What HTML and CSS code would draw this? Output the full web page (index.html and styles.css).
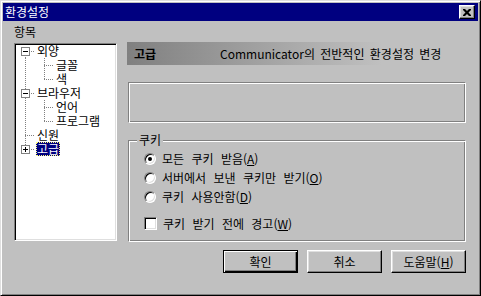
FILE: index.html
```html
<!DOCTYPE html>
<html lang="ko">
<head>
<meta charset="utf-8">
<title>환경설정</title>
<link rel="stylesheet" href="styles.css">
</head>
<body>
<div class="window">
  <div class="titlebar">
    <span class="title">환경설정</span>
    <button class="close" type="button" aria-label="닫기">
      <svg width="8" height="7" viewBox="0 0 8 7"><path d="M0 0h2l2 2 2-2h2v1l-2.5 2.5L8 6v1H6L4 5 2 7H0V6l2.5-2.5L0 1z" fill="#000"/></svg>
    </button>
  </div>
  <div class="main">
    <div class="left">
      <div class="label">항목</div>
      <div class="tree">
        <ul class="tree-list">
          <li class="row"><span class="cell c-first"><svg class="box" width="9" height="9" viewBox="0 0 9 9"><rect x="0.5" y="0.5" width="8" height="8" fill="#fff" stroke="#808080"/><path d="M2 4.5h5" stroke="#000"/></svg></span><span class="txt">외양</span></li>
          <li class="row"><span class="cell c-pass"></span><span class="cell c-tee"></span><span class="txt">글꼴</span></li>
          <li class="row"><span class="cell c-pass"></span><span class="cell c-ell"></span><span class="txt">색</span></li>
          <li class="row"><span class="cell c-mid"><svg class="box" width="9" height="9" viewBox="0 0 9 9"><rect x="0.5" y="0.5" width="8" height="8" fill="#fff" stroke="#808080"/><path d="M2 4.5h5" stroke="#000"/></svg></span><span class="txt">브라우저</span></li>
          <li class="row"><span class="cell c-pass"></span><span class="cell c-tee"></span><span class="txt">언어</span></li>
          <li class="row"><span class="cell c-pass"></span><span class="cell c-ell"></span><span class="txt">프로그램</span></li>
          <li class="row"><span class="cell c-tee"></span><span class="txt">신원</span></li>
          <li class="row"><span class="cell c-ell"><svg class="box" width="9" height="9" viewBox="0 0 9 9"><rect x="0.5" y="0.5" width="8" height="8" fill="#fff" stroke="#808080"/><path d="M2 4.5h5M4.5 2v5" stroke="#000"/></svg></span><span class="txt sel">고급</span></li>
        </ul>
      </div>
    </div>
    <div class="right">
      <div class="banner"><b class="banner-title">고급</b><span class="banner-desc">Communicator의 전반적인 환경설정 변경</span></div>
      <div class="frame"></div>
      <div class="group">
        <span class="legend">쿠키</span>
        <div class="opt"><span class="radio checked"></span><span>모든 쿠키 받음(<u>A</u>)</span></div>
        <div class="opt"><span class="radio"></span><span>서버에서 보낸 쿠키만 받기(<u>O</u>)</span></div>
        <div class="opt"><span class="radio"></span><span>쿠키 사용안함(<u>D</u>)</span></div>
        <div class="opt opt-check"><span class="check"></span><span>쿠키 받기 전에 경고(<u>W</u>)</span></div>
      </div>
      <div class="buttons">
        <button class="btn default" type="button">확인</button>
        <button class="btn" type="button">취소</button>
        <button class="btn" type="button">도움말(<u>H</u>)</button>
      </div>
    </div>
  </div>
</div>
</body>
</html>
```
FILE: styles.css
```css
html, body {
  margin: 0;
  padding: 0;
  background: #c0c0c0;
}
body {
  font-family: "Noto Sans CJK KR", "DejaVu Sans", sans-serif;
  font-size: 12px;
  color: #000;
}
.window {
  box-sizing: border-box;
  width: 481px;
  height: 296px;
  background: #c0c0c0;
  border: 1px solid;
  border-color: #dfdfdf #000 #000 #dfdfdf;
  box-shadow: inset 1px 1px #fff, inset -1px -1px #808080;
  padding: 2px;
  display: flex;
  flex-direction: column;
}
.titlebar {
  height: 18px;
  background: #000080;
  color: #fff;
  display: flex;
  align-items: center;
  justify-content: space-between;
  padding: 0 3px 0 2px;
}
.title {
  line-height: 18px;
  font-size: 12px;
}
.close {
  box-sizing: border-box;
  width: 16px;
  height: 14px;
  padding: 0;
  margin: 0;
  background: #c0c0c0;
  border: 1px solid;
  border-color: #fff #000 #000 #fff;
  box-shadow: inset -1px -1px #808080, inset 1px 1px #dfdfdf;
  display: flex;
  align-items: center;
  justify-content: center;
}
.close svg { display: block; margin-left: -1px; }
.main {
  display: flex;
  padding-left: 11px;
}
.left {
  width: 103px;
  display: flex;
  flex-direction: column;
}
.label {
  line-height: 14px;
  margin-top: 4px;
}
.tree {
  box-sizing: border-box;
  margin-top: 4px;
  height: 198px;
  background: #fff;
  border: 1px solid;
  border-color: #808080 #fff #fff #808080;
  box-shadow: inset 1px 1px #000, inset -1px -1px #dfdfdf;
  padding: 1px;
}
.tree-list {
  list-style: none;
  margin: -1px 0 0 0;
  padding: 0;
}
.row {
  display: flex;
  align-items: center;
  height: 14px;
}
.cell {
  flex: none;
  width: 19px;
  height: 14px;
  display: flex;
  align-items: center;
  background-repeat: no-repeat;
}
.box { display: block; margin-left: 5px; }
.c-first {
  background-image:
    repeating-linear-gradient(#808080 0 1px, transparent 1px 2px),
    repeating-linear-gradient(to right, #808080 0 1px, transparent 1px 2px);
  background-size: 1px 7px, 10px 1px;
  background-position: 9px 7px, 9px 7px;
}
.c-mid, .c-tee {
  background-image:
    repeating-linear-gradient(#808080 0 1px, transparent 1px 2px),
    repeating-linear-gradient(to right, #808080 0 1px, transparent 1px 2px);
  background-size: 1px 14px, 10px 1px;
  background-position: 9px 0, 9px 7px;
}
.c-ell {
  background-image:
    repeating-linear-gradient(#808080 0 1px, transparent 1px 2px),
    repeating-linear-gradient(to right, #808080 0 1px, transparent 1px 2px);
  background-size: 1px 8px, 10px 1px;
  background-position: 9px 0, 9px 7px;
}
.c-pass {
  background-image: repeating-linear-gradient(#808080 0 1px, transparent 1px 2px);
  background-size: 1px 14px;
  background-position: 9px 0;
}
.txt {
  display: block;
  height: 14px;
  margin-left: 1px;
  padding: 0 1px;
  line-height: 14px;
  white-space: nowrap;
}
.txt.sel {
  background: #000080;
  color: #fff;
  outline: 1px dotted #ffff80;
  outline-offset: -1px;
}
.right {
  margin-left: 10px;
  width: 340px;
  display: flex;
  flex-direction: column;
}
.banner {
  margin-top: 21px;
  height: 23px;
  display: flex;
  align-items: center;
  background: linear-gradient(to right, #808080 0%, #c0c0c0 75%, #c0c0c0 100%);
  padding-left: 7px;
}
.banner-title {
  width: 86px;
  font-weight: 700;
}
.banner-desc {
  word-spacing: 2px;
}
.frame {
  box-sizing: border-box;
  margin: 17px 1px 0 1px;
  height: 41px;
  border: 1px solid;
  border-color: #808080 #fff #fff #808080;
  box-shadow: inset 1px 1px #fff, inset -1px -1px #808080;
}
.group {
  box-sizing: border-box;
  margin: 17px 1px 0 1px;
  height: 102px;
  border: 1px solid;
  border-color: #808080 #fff #fff #808080;
  box-shadow: inset 1px 1px #fff, inset -1px -1px #808080;
  padding: 0 0 0 15px;
  display: flex;
  flex-direction: column;
}
.legend {
  align-self: flex-start;
  margin: -8px 0 0 -7px;
  padding: 0 2px;
  background: #c0c0c0;
  line-height: 14px;
}
.opt {
  display: flex;
  align-items: center;
  height: 19px;
  gap: 6px;
  word-spacing: 4px;
  white-space: nowrap;
}
.legend + .opt { margin-top: 2px; }
.opt-check { margin-top: 8px; }
.radio {
  box-sizing: border-box;
  width: 12px;
  height: 12px;
  border-radius: 50%;
  background: #fff;
  border: 1px solid;
  border-color: #808080 #fff #fff #808080;
  box-shadow: inset 1px 1px #000, inset -1px -1px #dfdfdf;
  display: flex;
  align-items: center;
  justify-content: center;
}
.radio.checked::after {
  content: "";
  width: 4px;
  height: 4px;
  border-radius: 50%;
  background: #000;
}
.check {
  box-sizing: border-box;
  width: 13px;
  height: 13px;
  background: #fff;
  border: 1px solid;
  border-color: #808080 #fff #fff #808080;
  box-shadow: inset 1px 1px #000, inset -1px -1px #dfdfdf;
}
.buttons {
  margin-top: 8px;
  display: flex;
  justify-content: flex-end;
  gap: 9px;
  padding-right: 1px;
}
.btn {
  box-sizing: border-box;
  width: 75px;
  height: 23px;
  padding: 0;
  margin: 0;
  font: inherit;
  color: #000;
  background: #c0c0c0;
  border: 1px solid;
  border-color: #fff #000 #000 #fff;
  box-shadow: inset -1px -1px #808080, inset 1px 1px #dfdfdf;
}
.btn.default {
  border-color: #000;
  box-shadow: inset 1px 1px #fff, inset -1px -1px #000, inset -2px -2px #808080;
}
```
